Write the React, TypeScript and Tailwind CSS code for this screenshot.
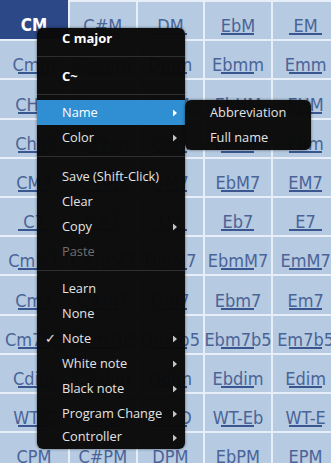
import React from "react";

const notes = ["C", "C#", "D", "Eb", "E", "F", "F#", "G", "Ab", "A", "Bb", "B"];
const rowFns: ((n: string) => string)[] = [
  (n) => n + "M",
  (n) => n + "mm",
  (n) => n + "HM",
  (n) => n + "hm",
  (n) => n + "M7",
  (n) => n + "7",
  (n) => n + "mM7",
  (n) => n + "m7",
  (n) => n + "m7b5",
  (n) => n + "dim",
  (n) => "WT-" + n,
  (n) => n + "PM",
];

const cellFont = {
  fontFamily: '"Liberation Sans Narrow", "DejaVu Sans Condensed", "Roboto", sans-serif',
};

function Cell({ label, selected }: { label: string; selected: boolean }) {
  if (selected) {
    return (
      <div
        className="-mt-[2px] flex flex-col items-center justify-end bg-[#2c4886] pb-[7px]"
        style={cellFont}
      >
        <span className="text-[17px] font-bold leading-[14px] text-white">{label}</span>
      </div>
    );
  }
  return (
    <div className="flex flex-col items-center justify-end bg-[#b6cae1] pb-[4px]" style={cellFont}>
      <span className="whitespace-nowrap text-[18px] leading-[14px] text-[#4a6498]">{label}</span>
      <div className="h-[2px] w-[33px] bg-[#3a5690]" />
    </div>
  );
}

function Arrow({ white }: { white?: boolean }) {
  return (
    <svg
      width="4"
      height="7"
      viewBox="0 0 4 7"
      className="absolute right-[8px] top-1/2 -translate-y-1/2"
    >
      <path d="M0 0 L4 3.5 L0 7 Z" fill={white ? "#ffffff" : "#c4c4c4"} />
    </svg>
  );
}

const menuFont = { fontFamily: '"Open Sans", "Noto Sans", sans-serif' };

function Item({
  label,
  arrow,
  active,
  disabled,
  checked,
  className,
}: {
  label: string;
  arrow?: boolean;
  active?: boolean;
  disabled?: boolean;
  checked?: boolean;
  className?: string;
}) {
  return (
    <div
      className={
        "relative flex items-center pl-[25px] text-[12.8px] " +
        (active ? "bg-[#2f8fd2] text-white " : disabled ? "text-[#6f6f6f] " : "text-[#e4e4e4] ") +
        (className ?? "h-[25px]")
      }
    >
      {checked && (
        <span
          className="absolute left-[8px] text-[13px] text-[#e4e4e4]"
          style={{ fontFamily: '"DejaVu Sans", sans-serif' }}
        >
          ✓
        </span>
      )}
      <span className="whitespace-nowrap">{label}</span>
      {arrow && <Arrow white={active} />}
    </div>
  );
}

function Sep({ className }: { className: string }) {
  return <div className={"h-px bg-[#2f2f2f] " + className} />;
}

export default function App() {
  return (
    <div className="relative h-[463px] w-full overflow-hidden bg-[#e7eef7]">
      <div className="grid w-max grid-cols-[68px_repeat(11,65.6px)] auto-rows-[37.2px] gap-[2px] pt-[2px]">
        {rowFns.map((fn, r) =>
          notes.map((n, c) => (
            <Cell key={r + "-" + c} label={fn(n)} selected={r === 0 && c === 0} />
          ))
        )}
      </div>

      {/* main context menu */}
      <div
        className="absolute left-[37px] top-[28px] z-10 w-[148px] overflow-hidden rounded-[6px] bg-[#0a0a0a]/[0.98] shadow-[0_0_3px_rgba(0,0,0,0.55)]"
        style={menuFont}
      >
        <div className="flex h-[21px] items-center pl-[25px] text-[13px] font-bold text-white">
          C major
        </div>
        <Sep className="mt-[7px] mb-[7px]" />
        <div className="flex h-[25px] items-center pl-[25px] text-[13px] font-bold text-white">
          C~
        </div>
        <Sep className="mt-[5px] mb-[5px]" />
        <Item label="Name" arrow active />
        <Item label="Color" arrow />
        <Sep className="mt-[6px] mb-[7px]" />
        <Item label="Save (Shift-Click)" />
        <Item label="Clear" />
        <Item label="Copy" arrow />
        <Item label="Paste" disabled />
        <Sep className="mt-[6px] mb-[5px]" />
        <Item label="Learn" />
        <Item label="None" />
        <Item label="Note" arrow checked />
        <Item label="White note" arrow />
        <Item label="Black note" arrow />
        <Item label="Program Change" arrow />
        <Item label="Controller" arrow className="h-[23px] pb-[2px]" />
      </div>

      {/* submenu */}
      <div
        className="absolute left-[185px] top-[100px] z-10 w-[126px] overflow-hidden rounded-[6px] bg-[#0a0a0a]/[0.98] shadow-[0_0_3px_rgba(0,0,0,0.55)]"
        style={menuFont}
      >
        <Item label="Abbreviation" />
        <Item label="Full name" />
      </div>
    </div>
  );
}
